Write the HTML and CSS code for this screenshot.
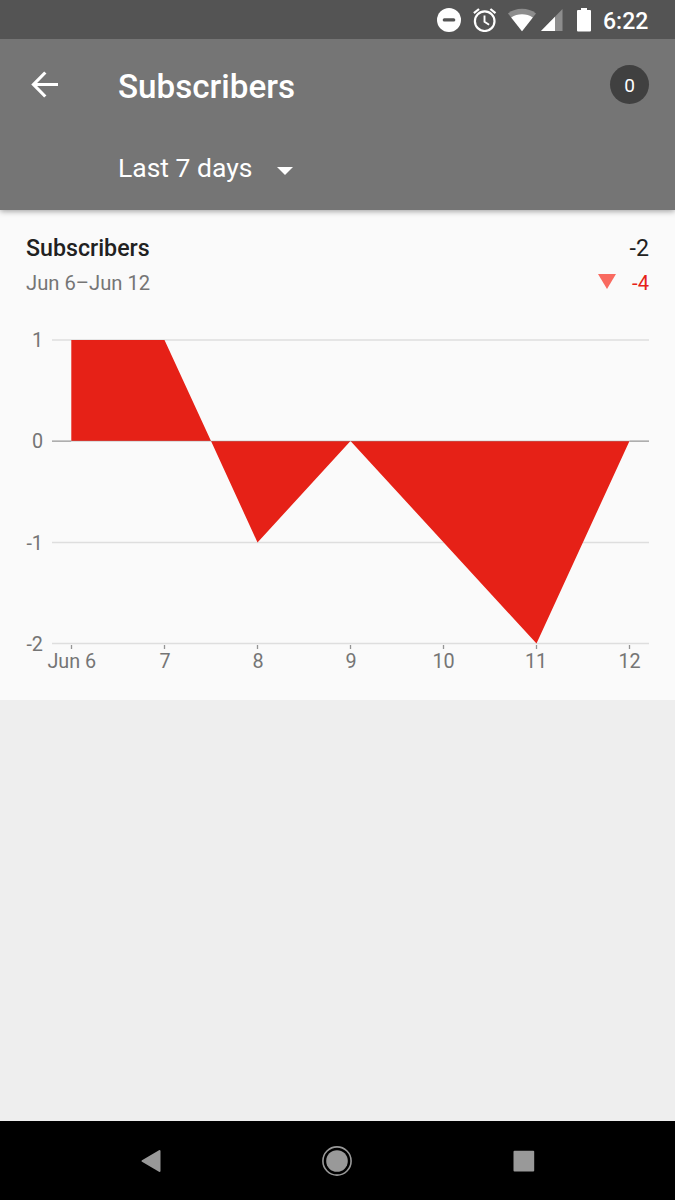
FILE: index.html
```html
<!DOCTYPE html>
<html lang="en">
<head>
  <meta charset="UTF-8">
  <meta name="viewport" content="width=device-width, initial-scale=1">
  <title>Subscribers</title>
  <link rel="stylesheet" href="styles.css">
</head>
<body>
  <div class="screen">
    <div class="status-bar">
      <!-- Do not disturb -->
      <svg class="icon-dnd" width="24" height="24" viewBox="0 0 24 24">
        <circle cx="12" cy="12" r="12" fill="#fff"/>
        <rect x="5.7" y="10.3" width="12.6" height="3.2" rx="1.6" fill="#545454"/>
      </svg>
      <!-- Alarm -->
      <svg class="icon-alarm" width="24" height="24" viewBox="0 0 24 24" fill="none" stroke="#fff" stroke-width="2.2">
        <circle cx="11.7" cy="13.2" r="9.8"/>
        <path d="M.9 5.2 6 1M22.5 5.2 17.4 1"/>
        <path d="M11.5 7.5v6.3l4.6 2.9" stroke-width="1.9"/>
      </svg>
      <!-- Wifi -->
      <svg class="icon-wifi" width="28" height="24" viewBox="0 0 28 24">
        <path d="M14 23.2 0 5.4C4 2.2 8.7.7 14 .7s10 1.5 14 4.7z" fill="#8d8d8d"/>
        <path d="M14 23.2 3.2 9.5C6.4 7.3 10 6.2 14 6.2s7.6 1.1 10.8 3.3z" fill="#fff"/>
      </svg>
      <!-- Signal -->
      <svg class="icon-signal" width="22" height="24" viewBox="0 0 22 24">
        <path d="M21.5 1v22H0z" fill="#8d8d8d"/>
        <path d="M14 8.7V23H0z" fill="#fff"/>
      </svg>
      <!-- Battery -->
      <svg class="icon-battery" width="14" height="24" viewBox="0 0 14 24">
        <path d="M4 0h6v2h3a1 1 0 0 1 1 1v19.5a1 1 0 0 1-1 1H1a1 1 0 0 1-1-1V3a1 1 0 0 1 1-1h3z" fill="#fff"/>
      </svg>
      <span class="clock">6:22</span>
    </div>

    <header class="app-bar">
      <div class="title-row">
        <svg class="back" width="28" height="28" viewBox="0 0 28 28" fill="none" stroke="#fff" stroke-width="3.2">
          <path d="M27 13.5H3.5M14.3 1.5 2.5 13.5l11.8 12"/>
        </svg>
        <h1>Subscribers</h1>
        <div class="avatar">0</div>
      </div>
      <div class="period">
        <span>Last 7 days</span>
        <svg width="16" height="8" viewBox="0 0 16 8"><path d="M0 0h16L8 8z" fill="#fff"/></svg>
      </div>
    </header>

    <main class="card">
      <div class="card-row">
        <h2>Subscribers</h2>
        <span class="total">-2</span>
      </div>
      <div class="card-row small">
        <span class="range">Jun 6–Jun 12</span>
        <span class="change">
          <svg width="18" height="15" viewBox="0 0 18 15"><path d="M0 0h18L9 15z" fill="#f96a60"/></svg>
          -4
        </span>
      </div>

      <svg class="chart" width="675" height="380" viewBox="0 320 675 380">
        <!-- Grid lines -->
        <g class="grid">
          <path d="M52 340H649M52 542.5H649M52 643.5H649"/>
        </g>
        <!-- Area, filled to the zero line -->
        <path class="area" d="M71.3 340H164.5L211 441H71.3zM211 441H350.5L257.5 542.5zM350.5 441H629.5L536.5 643.5z"/>
        <path class="zero" d="M52 441.2H71.3M629.5 441.2H649"/>
        <path class="zero faint" d="M71.3 441.2H629.5"/>
        <path class="ticks" d="M71.5 645v4M164.5 645v4M257.5 645v4M350.5 645v4M443.5 645v4M536.5 645v4M629.5 645v4"/>
        <g class="label y">
          <text x="43" y="347">1</text>
          <text x="43" y="448">0</text>
          <text x="43" y="549.5">-1</text>
          <text x="43" y="650.5">-2</text>
        </g>
        <g class="label x">
          <text x="71.8" y="667.5">Jun 6</text>
          <text x="165" y="667.5">7</text>
          <text x="258" y="667.5">8</text>
          <text x="351" y="667.5">9</text>
          <text x="443.5" y="667.5">10</text>
          <text x="536" y="667.5">11</text>
          <text x="629.5" y="667.5">12</text>
        </g>
      </svg>
    </main>

    <nav class="nav-bar">
      <svg width="30" height="30" viewBox="0 0 30 30"><path d="M6.5 15 23.5 5v20z" fill="#999" stroke="#999" stroke-width="2" stroke-linejoin="round"/></svg>
      <svg width="30" height="30" viewBox="0 0 30 30">
        <circle cx="15" cy="15" r="14.1" fill="none" stroke="#999" stroke-width="1.6"/>
        <circle cx="15" cy="15" r="10.8" fill="#999"/>
      </svg>
      <svg width="30" height="30" viewBox="0 0 30 30"><rect x="4.5" y="4.8" width="20.7" height="20.7" rx="1" fill="#999"/></svg>
    </nav>
  </div>
</body>
</html>
```

FILE: styles.css
```css
* {
  margin: 0;
  padding: 0;
  box-sizing: border-box;
}
body {
  font-family: Roboto, sans-serif;
  background: #eee;
}
svg {
  display: block;
  flex: none;
}
.screen {
  display: flex;
  flex-direction: column;
  width: 675px;
  height: 1200px;
}

/* Status bar */
.status-bar {
  position: relative;
  z-index: 1;
  display: flex;
  justify-content: flex-end;
  align-items: center;
  height: 39px;
  padding-right: 26px;
  background: #545454;
  color: #fff;
}
.icon-alarm {
  margin-left: 12px;
}
.icon-wifi {
  margin-left: 11px;
}
.icon-signal {
  margin-left: 5px;
}
.icon-battery {
  margin-left: 14px;
}
.clock {
  width: 46px;
  margin-left: 12px;
  padding-top: 3px;
  font-size: 23px;
  font-weight: 500;
  white-space: nowrap;
}

/* App bar */
.app-bar {
  position: relative;
  height: 171px;
  background: #757575;
  color: #fff;
  box-shadow: 0 1px 6px rgba(0, 0, 0, 0.4);
}
.title-row {
  display: flex;
  align-items: center;
  height: 91px;
  padding: 0 26px 0 31px;
}
.title-row h1 {
  flex: 1;
  margin-left: 59px;
  padding-top: 3px;
  font-size: 33.2px;
  font-weight: 500;
}
.avatar {
  width: 39px;
  height: 39px;
  border-radius: 50%;
  background: #404040;
  font-size: 19px;
  line-height: 41px;
  text-align: center;
}
.period {
  display: flex;
  align-items: center;
  gap: 25px;
  height: 76px;
  padding-left: 118px;
  font-size: 26.5px;
}
.period span {
  margin-bottom: 2px;
}
.period svg {
  margin-top: 5px;
}

/* Card */
.card {
  height: 490px;
  padding-top: 19px;
  background: #fafafa;
}
.card-row {
  display: flex;
  justify-content: space-between;
  align-items: center;
  height: 37px;
  padding: 0 26px;
  color: #212121;
  font-size: 23.2px;
}
.card-row h2 {
  font-size: 23.2px;
  font-weight: 500;
}
.card-row.small {
  height: 33px;
  font-size: 20.2px;
}
.range {
  color: #757575;
}
.change {
  display: flex;
  align-items: center;
  gap: 16px;
  color: #e62117;
}
.change svg {
  margin-bottom: 2px;
}
.chart {
  margin-top: 21px;
}
.grid {
  stroke: #dedede;
  stroke-width: 1.3;
}
.area {
  fill: #e62117;
}
.zero,
.ticks {
  fill: none;
  stroke: #959595;
  stroke-width: 1.3;
}
.faint {
  opacity: 0.4;
}
.label {
  fill: #757575;
  font-size: 19.8px;
}
.label.y {
  text-anchor: end;
}
.label.x {
  text-anchor: middle;
}

/* Navigation bar */
.nav-bar {
  display: flex;
  justify-content: center;
  align-items: center;
  gap: 156.5px;
  height: 79px;
  margin-top: auto;
  padding-right: 1px;
  background: #000;
}
```
